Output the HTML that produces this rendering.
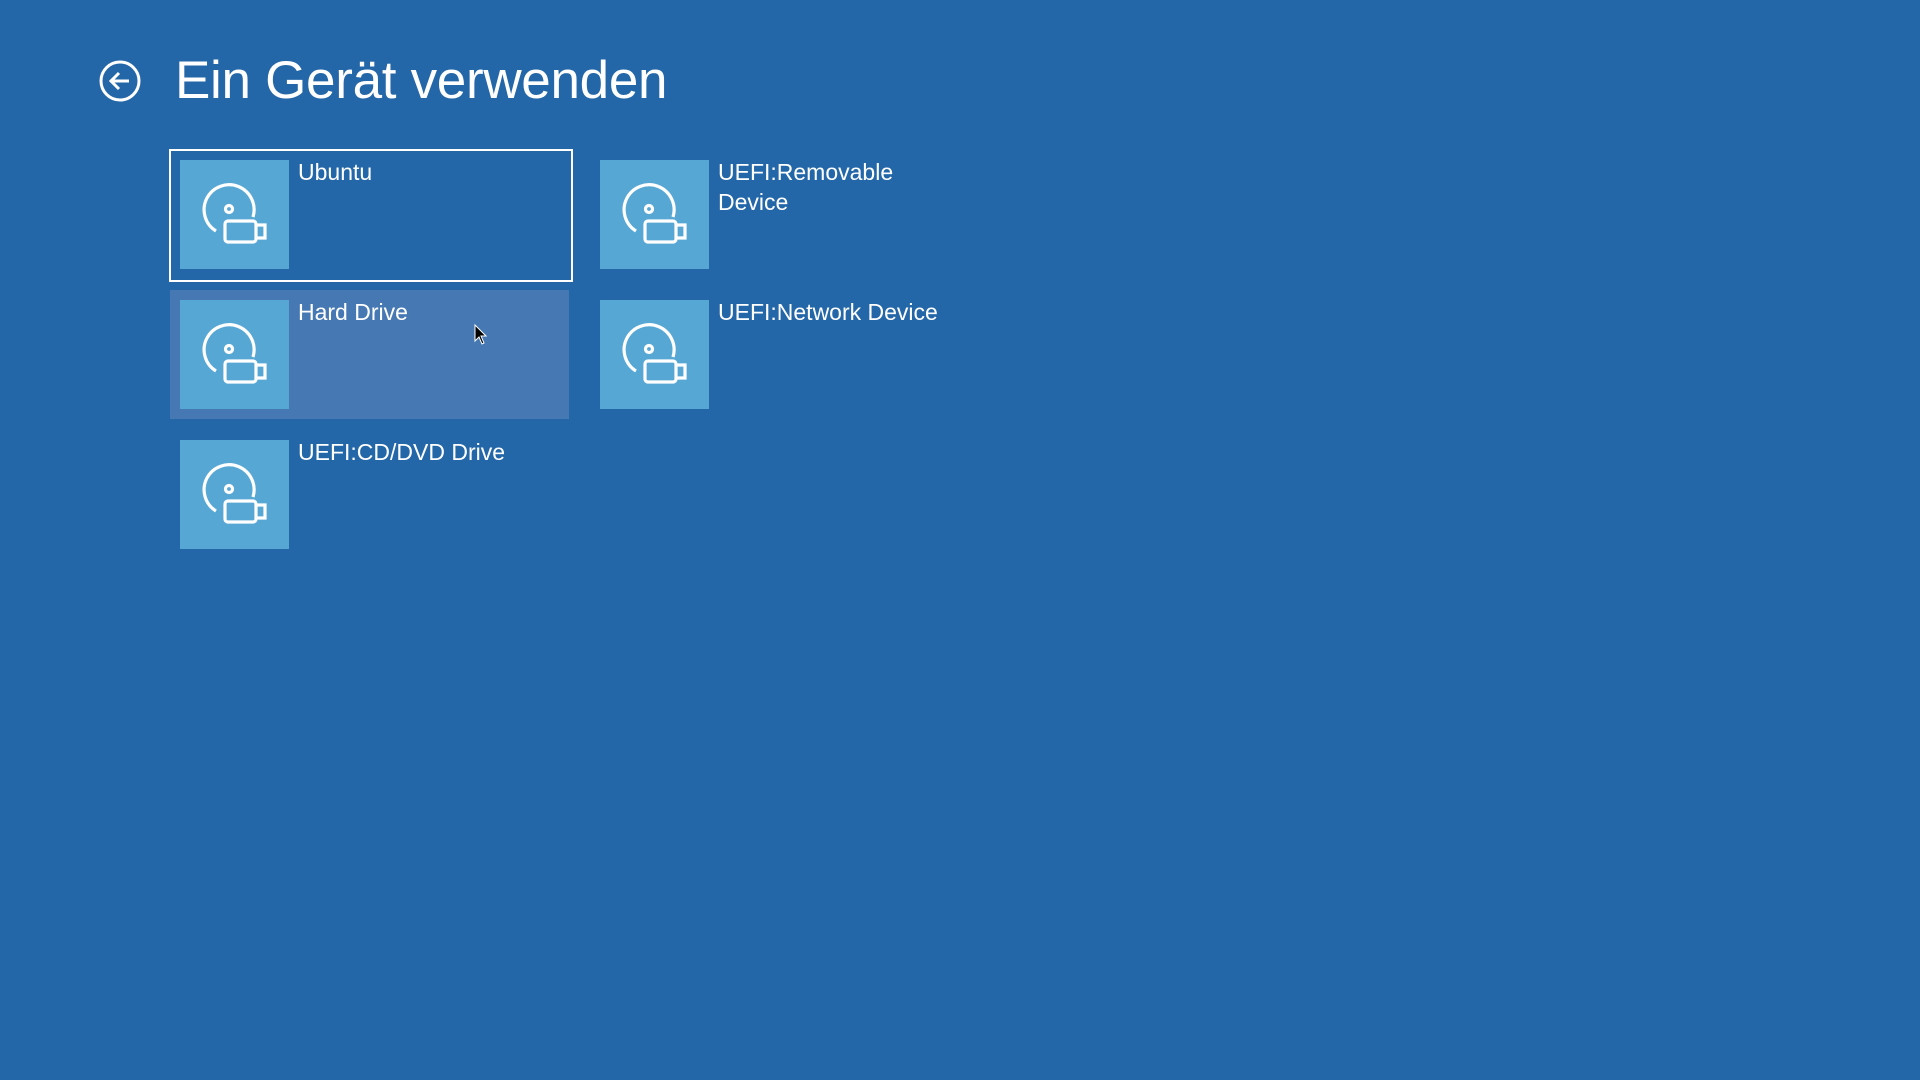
<!DOCTYPE html>
<html><head><meta charset="utf-8"><style>
body{margin:0;width:1920px;height:1080px;background:#2367a8;font-family:"Segoe UI","Liberation Sans",sans-serif;color:#fff;position:relative;overflow:hidden}
.t{position:absolute;left:175px;top:50px;font-size:53px;font-weight:300;letter-spacing:-0.3px}
.ic{position:absolute;width:109px;height:109px;background:#57a7d5}
.lb{position:absolute;font-size:23px;line-height:30px}
.sel{position:absolute;left:169px;top:149px;width:400px;height:129px;border:2px solid #fff}
.hov{position:absolute;left:170px;top:290px;width:399px;height:129px;background:#4679b4}
</style></head><body>
<svg style="position:absolute;left:98px;top:59px" width="44" height="44" viewBox="0 0 44 44" fill="none" stroke="#fff" stroke-width="3"><circle cx="22" cy="22" r="19"/><path d="M31 22H13M21 14l-8 8 8 8"/></svg>
<div class="t">Ein Gerät verwenden</div>
<div class="sel"></div><div class="hov"></div>
<svg width="0" height="0" style="position:absolute"><defs><g id="d" fill="none" stroke="#fff" stroke-width="3.2"><path d="M36 71A25 25 0 1 1 73 57"/><circle cx="49" cy="49" r="3.5"/><rect x="45" y="61" width="31" height="21" rx="3"/><path d="M76 65h9v13h-9"/></g></defs></svg>
<div class="ic" style="left:180px;top:160px"><svg width="109" height="109"><use href="#d"/></svg></div>
<div class="ic" style="left:180px;top:300px"><svg width="109" height="109"><use href="#d"/></svg></div>
<div class="ic" style="left:180px;top:440px"><svg width="109" height="109"><use href="#d"/></svg></div>
<div class="ic" style="left:600px;top:160px"><svg width="109" height="109"><use href="#d"/></svg></div>
<div class="ic" style="left:600px;top:300px"><svg width="109" height="109"><use href="#d"/></svg></div>
<div class="lb" style="left:298px;top:157px">Ubuntu</div>
<div class="lb" style="left:298px;top:297px">Hard Drive</div>
<div class="lb" style="left:298px;top:437px">UEFI:CD/DVD Drive</div>
<div class="lb" style="left:718px;top:157px">UEFI:Removable<br>Device</div>
<div class="lb" style="left:718px;top:297px">UEFI:Network Device</div>
<svg style="position:absolute;left:474px;top:324px" width="14" height="22" viewBox="0 0 14 22"><path d="M1 1v16l4-4 3 7 2-1-3-7h5z" fill="#000" stroke="#fff" stroke-width="1"/></svg>
</body></html>
